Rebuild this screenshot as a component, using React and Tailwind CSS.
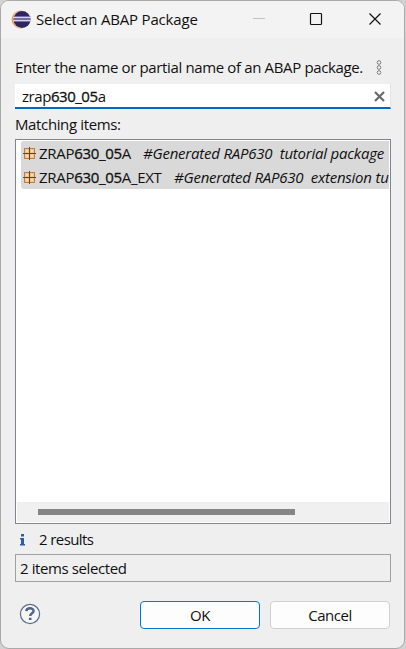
const items = [
  { pre: "ZRAP", match: "630_05", post: "A", desc: "#Generated RAP630\u00a0 tutorial package", nameCls: "w-[104px]", nameTrack: "tracking-[-0.31px]" },
  { pre: "ZRAP", match: "630_05", post: "A_EXT", desc: "#Generated RAP630\u00a0 extension tu", nameCls: "w-[135px]", nameTrack: "tracking-[-0.31px]" },
];

function EclipseLogo() {
  return (
    <svg width="20" height="20" viewBox="0 0 20 20" className="shrink-0">
      <circle cx="9.6" cy="9.5" r="9" fill="#f09a3c" />
      <circle cx="10.8" cy="9.5" r="8.9" fill="#f4e6d8" />
      <circle cx="11" cy="9.5" r="8.5" fill="#30265f" />
      <path d="M2.5 7.5h17M2.5 10.5h17" stroke="#8f88b8" strokeWidth="2.4" />
      <path d="M2 7.5h18M2 10.5h18" stroke="#d8d4e6" strokeWidth="1" />
    </svg>
  );
}

function PackageIcon() {
  return (
    <svg width="13" height="13" viewBox="0 0 13 13" className="mt-px shrink-0">
      <rect x="1.5" y="1.5" width="10" height="10" fill="#f0c58c" stroke="#c47a52" />
      <path d="M3 4h2M8 4h2M3 9h2M8 9h2" stroke="#f6e0ae" strokeWidth="2" />
      <path d="M6.5 0v13M0 6.5h13" stroke="#6b4030" />
    </svg>
  );
}

function TitleBar() {
  return (
    <header className="flex h-[37px] shrink-0 items-center bg-[#f3f3f3] pl-[10px]">
      <EclipseLogo />
      <h1 className="ml-[5px] w-[216px] pb-[2px] text-[15px] leading-5 tracking-[-0.18px]">Select an ABAP Package</h1>
      <svg width="152" height="37" viewBox="0 0 152 37" fill="none" className="shrink-0">
        <path d="M1 17.5h12" stroke="#c2c2c2" />
        <rect x="58.5" y="12.5" width="11" height="11" rx="0.8" stroke="#111" strokeWidth="1.2" />
        <path d="M117.5 12.5l11 11M128.5 12.5l-11 11" stroke="#111" strokeWidth="1.2" />
      </svg>
    </header>
  );
}

export default function App() {
  return (
    <div className="h-[649px] w-[406px] overflow-hidden bg-[#d2d2d2] font-['Open_Sans','Noto_Sans',sans-serif] text-[15px] leading-5 whitespace-nowrap text-[#111]">
      <div className="flex h-[649px] w-[405px] flex-col overflow-hidden rounded-[9px] border border-[#a9a9a9] bg-[#efefef]">
        <TitleBar />
        <main className="flex flex-1 flex-col pr-[13px] pl-[14px]">
          <div className="mt-[20px] flex h-5 w-[376px] items-center justify-between pr-[8px]">
            <label className="pb-[2px] tracking-[-0.36px]">Enter the name or partial name of an ABAP package.</label>
            <svg width="8" height="16" viewBox="0 0 8 16" fill="#f8f8f8" stroke="#777">
              <circle cx="4" cy="2.5" r="1.8" />
              <circle cx="4" cy="7.5" r="1.8" />
              <circle cx="4" cy="12.5" r="1.8" />
            </svg>
          </div>
          <div className="mt-[6px] flex h-[25px] w-[376px] shrink-0 items-center justify-between border-r border-b-2 border-r-[#dfe5ea] border-b-[#0067c0] bg-white pr-[5px] pl-[7px]">
            <span className="tracking-[-0.45px]">zrap<span className="[-webkit-text-stroke:0.3px_#111]">630_05</span>a</span>
            <svg width="11" height="11" viewBox="0 0 11 11" className="mt-px">
              <path d="M1 1l9 9M10 1l-9 9" stroke="#6a6a6a" strokeWidth="2.2" />
            </svg>
          </div>
          <div className="mt-[5px] h-[21px] tracking-[-0.37px]">Matching items:</div>
          <div className="mt-[4px] flex h-[385px] w-[376px] shrink-0 flex-col border border-[#82858f] bg-white p-px">
            <div className="ml-[4px] overflow-hidden rounded-l-[3px]">
              {items.map((it) => (
                <div key={it.post} className="flex h-6 items-center bg-[#d9d9d9] pl-[2px]">
                  <PackageIcon />
                  <span className={`ml-[3px] shrink-0 pb-px ${it.nameCls} ${it.nameTrack}`}>
                    {it.pre}<span className="[-webkit-text-stroke:0.3px_#111]">{it.match}</span>{it.post}
                  </span>
                  <span className="pb-px tracking-[-0.22px] italic">{it.desc}</span>
                </div>
              ))}
            </div>
            <div className="mt-auto flex h-5 items-center bg-[#f0f0f0] pl-[21px]">
              <div className="h-[6px] w-[257px] bg-[#858585]" />
            </div>
          </div>
          <div className="mt-[6px] flex h-5 items-center">
            <svg width="10" height="14" viewBox="0 0 10 14" className="-mt-px ml-[3px]" fill="#3158ad">
              <path d="M3 1h3v2.5H3zM2 5h4v6h1v1.5H2V11h1V6.5H2z" />
            </svg>
            <span className="ml-[11px] pb-[2px] tracking-[-0.6px]">2 results</span>
          </div>
          <div className="mt-[4px] flex h-[28px] w-[376px] shrink-0 items-center border border-[#a0a0a0] pb-px pl-[4px] tracking-[-0.4px]">2 items selected</div>
          <div className="mt-[19px] flex h-[28px] items-center">
            <svg width="22" height="22" viewBox="0 0 22 22" className="-mt-[3px] ml-[4px]" fill="none">
              <circle cx="11" cy="11" r="9.6" fill="#f6f6f6" stroke="#5c6d8c" strokeWidth="1.2" />
              <path d="M7.3 8.2C7.6 4.3 14.6 4.3 14.6 8c0 2.4-3.4 2.2-3.4 5.1" stroke="#526588" strokeWidth="2.4" />
              <path d="M9.9 14.7h2.6v2.4H9.9z" fill="#526588" />
            </svg>
            <button className="ml-[99px] h-[28px] w-[120px] rounded-[4px] border border-[#0078d4] bg-[#fdfdfd] pb-px tracking-[-0.5px]">OK</button>
            <button className="ml-[10px] h-[28px] w-[120px] rounded-[4px] border border-[#d0d0d0] bg-[#fdfdfd] pb-px tracking-[-0.5px]">Cancel</button>
          </div>
        </main>
      </div>
    </div>
  );
}
